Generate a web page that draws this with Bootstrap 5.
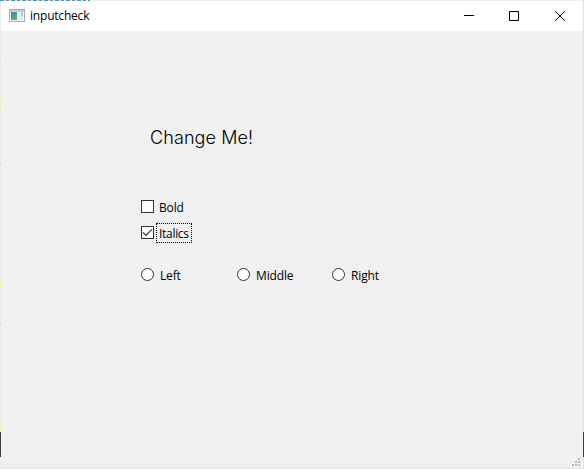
<!DOCTYPE html>
<html lang="en">
<head>
<meta charset="utf-8">
<meta name="viewport" content="width=device-width, initial-scale=1">
<title>inputcheck</title>
<link href="https://cdn.jsdelivr.net/npm/bootstrap@5.3.0/dist/css/bootstrap.min.css" rel="stylesheet">
<style>
body{font-family:"Open Sans","Noto Sans",sans-serif;font-size:12px;line-height:16px;color:#000;background:#f0f0f0}
.app-window{width:584px;height:469px;background:#f0f0f0;border:1px solid #e2e2e2;border-top-color:#ececec;border-left-color:#ebebeb}
.title-bar{height:30px;background:#fff;padding-left:8px}
.title-text{margin-left:5px;letter-spacing:-.2px}
.win-btn{width:46px;height:30px;background:none;border:0;padding:0}
.win-btn:first-child{width:45px}
.form-area{padding:93px 0 0 140px}
.preview{font-family:Inter,"Liberation Sans",sans-serif;font-weight:300;font-size:18px;line-height:28px;margin-left:9px;height:28px;white-space:nowrap;letter-spacing:.1px}
.checks{margin-top:45px;gap:6px}
.option{height:20px}
.check-box,.radio-dot{appearance:none;width:13px;height:13px;background:#fff;margin:0 0 1px;flex:none}
.check-box{border:1px solid #333}
.check-box:checked{background:#fff url("data:image/svg+xml,%3Csvg xmlns='http://www.w3.org/2000/svg' viewBox='0 0 11 11'%3E%3Cpath d='M1 5.4 4 8.4 10 2.4' fill='none' stroke='%23333' stroke-width='1.3'/%3E%3C/svg%3E")}
.radio-dot{border:1px solid #333;border-radius:50%}
.option-text{border:1px dotted transparent;padding:2px 2px 0;margin-left:2px;height:20px;letter-spacing:-.15px}
.option-text.focused{border-color:#000;letter-spacing:-.3px}
.radios{margin-top:22px}
.radios .option{width:96px}
.radios .option + .option{width:95px}
.radios .option-text{margin-left:3px}
.edge{width:1px;height:25px;background:#3a3a3a;top:432px}
.specks{width:1px;height:432px;top:0;left:0;background:linear-gradient(#f0d2a0,#f0d2a0) 0 58px/1px 2px,linear-gradient(#f0f0a8,#f0f0a8) 0 90px/1px 1px,linear-gradient(#f0f0a0,#f0f0a0) 0 100px/1px 1px,linear-gradient(#f2c85a,#f2c85a) 0 106px/1px 1px,linear-gradient(#f2d87a,#f2d87a) 0 128px/1px 1px,linear-gradient(#f0d2a0,#f0d2a0) 0 163px/1px 2px,linear-gradient(#f2f2b4,#f2f2b4) 0 279px/1px 8px,linear-gradient(#f2c078,#f2c078) 0 323px/1px 1px,linear-gradient(#f2f2b4,#f2f2b4) 0 420px/1px 12px;background-repeat:no-repeat}
.grip{right:4px;bottom:3px}
.behind{top:0;left:0;width:90px;height:1px;background:repeating-linear-gradient(90deg,#389cc0 0 4px,#dce9ed 4px 6px,#7b8c94 6px 9px,#eee 9px 11px)}
</style>
<script src="https://cdn.jsdelivr.net/npm/bootstrap@5.3.0/dist/js/bootstrap.bundle.min.js"></script>
</head>
<body class="overflow-hidden">
<main class="app-window d-flex flex-column">
  <header class="title-bar d-flex align-items-center">
    <svg width="16" height="14" viewBox="0 0 16 14" shape-rendering="crispEdges" aria-hidden="true">
      <defs><linearGradient id="pane" x2="1" y2="1"><stop stop-color="#4b83b4"/><stop offset="1" stop-color="#55b873"/></linearGradient></defs>
      <path fill="#a6acb0" d="M0 0h16v13H0z"/><path fill="#c9cdd0" d="M1 1h14v2H1z"/><path fill="#f5f7f7" d="M1 3h14v9H1z"/>
      <path fill="url(#pane)" d="M2 3h6v8H2z"/><path fill="#e6eaec" d="M9 3h2v9H9z"/><path fill="#a9cbbd" d="M12 3h2v4h-2z"/><path fill="#dfe4e5" d="M12 7h2v4h-2z"/>
    </svg>
    <span class="title-text">inputcheck</span>
    <div class="ms-auto d-flex">
      <button class="win-btn d-flex align-items-center justify-content-center" aria-label="Minimize"><svg width="10" height="10"><path d="M0 4.5h10" stroke="#000"/></svg></button>
      <button class="win-btn d-flex align-items-center justify-content-center" aria-label="Maximize"><svg width="10" height="10"><path d="M.5.5h9v9h-9z" fill="none" stroke="#000"/></svg></button>
      <button class="win-btn d-flex align-items-center justify-content-center" aria-label="Close"><svg width="10" height="10"><path d="M0 0l10 10M10 0L0 10" stroke="#000"/></svg></button>
    </div>
  </header>
  <section class="form-area">
    <div class="preview">Change Me!</div>
    <div class="checks d-flex flex-column">
      <label class="option d-flex align-items-center"><input class="check-box" type="checkbox"><span class="option-text">Bold</span></label>
      <label class="option d-flex align-items-center"><input class="check-box" type="checkbox" checked><span class="option-text focused">Italics</span></label>
    </div>
    <div class="radios d-flex">
      <label class="option d-flex align-items-center"><input class="radio-dot" type="radio" name="align"><span class="option-text">Left</span></label>
      <label class="option d-flex align-items-center"><input class="radio-dot" type="radio" name="align"><span class="option-text">Middle</span></label>
      <label class="option d-flex align-items-center"><input class="radio-dot" type="radio" name="align"><span class="option-text">Right</span></label>
    </div>
  </section>
</main>
<div class="behind position-absolute"></div>
<div class="specks position-absolute"></div>
<div class="edge position-absolute start-0"></div>
<div class="edge position-absolute end-0"></div>
<svg class="grip position-absolute" width="8" height="8" fill="#bfbfbf" aria-hidden="true"><path d="M6 0h2v2H6zM3 3h2v2H3zM6 3h2v2H6zM0 6h2v2H0zM3 6h2v2H3zM6 6h2v2H6z"/></svg>
</body>
</html>
